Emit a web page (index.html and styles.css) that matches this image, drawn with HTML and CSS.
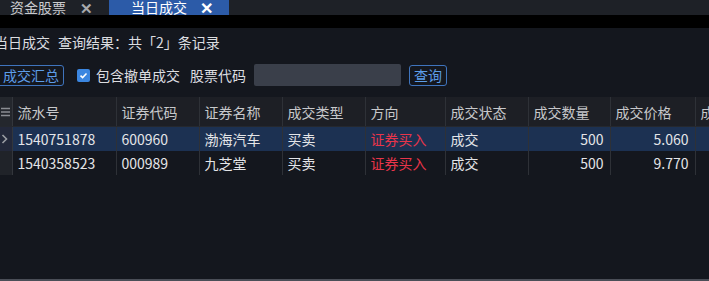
FILE: index.html
```html
<!DOCTYPE html>
<html lang="zh-CN">
<head>
    <meta charset="UTF-8">
    <title>当日成交</title>
    <link rel="stylesheet" href="styles.css">
</head>
<body>
    <div class="tabs">
        <div class="tab">资金股票<span class="close">✕</span></div>
        <div class="tab active">当日成交<span class="close">✕</span></div>
    </div>
    <div class="strip"></div>
    <div class="panel">
        <div class="title">当日成交<span class="result">查询结果：共「2」条记录</span></div>
        <div class="toolbar">
            <button class="btn">成交汇总</button>
            <label class="check"><span class="box">
                <svg width="9" height="9" viewBox="0 0 9 9"><path d="M1.5 4.6 L3.6 6.6 L7.5 2.4" fill="none" stroke="#fff" stroke-width="1.5"/></svg>
            </span>包含撤单成交</label>
            <span class="label">股票代码</span>
            <input class="code" type="text">
            <button class="btn small">查询</button>
        </div>
        <div class="grid-wrap">
            <table class="grid">
                <colgroup>
                    <col style="width:12px"><col style="width:104px"><col style="width:83px"><col style="width:83px"><col style="width:83px"><col style="width:80px"><col style="width:83px"><col style="width:82px"><col style="width:85px"><col style="width:90px">
                </colgroup>
                <tr>
                    <th class="rh">
                        <svg width="9" height="10" viewBox="0 0 9 10"><path d="M0 1.5H9M0 5H9M0 8.5H9" stroke="#8a8d93" stroke-width="1.6"/></svg>
                    </th>
                    <th>流水号</th><th>证券代码</th><th>证券名称</th><th>成交类型</th><th>方向</th><th>成交状态</th><th>成交数量</th><th>成交价格</th><th>成交金额</th>
                </tr>
                <tr class="sel">
                    <td class="rh">
                        <svg width="7" height="10" viewBox="0 0 7 10"><path d="M1.5 1 L5.5 5 L1.5 9" fill="none" stroke="#9a9da3" stroke-width="1.6"/></svg>
                    </td>
                    <td>1540751878</td><td>600960</td><td>渤海汽车</td><td>买卖</td><td class="buy">证券买入</td><td>成交</td><td class="num">500</td><td class="num">5.060</td><td class="num">2530.00</td>
                </tr>
                <tr>
                    <td class="rh"></td>
                    <td>1540358523</td><td>000989</td><td>九芝堂</td><td>买卖</td><td class="buy">证券买入</td><td>成交</td><td class="num">500</td><td class="num">9.770</td><td class="num">4885.00</td>
                </tr>
            </table>
        </div>
    </div>
    <div class="bottom"></div>
</body>
</html>
```

FILE: styles.css
```css
body { margin: 0; background: #14171e; font-family: "Noto Sans CJK SC", "Noto Sans", sans-serif; font-size: 14px; color: #dcdde0; overflow: hidden; height: 281px; display: flex; flex-direction: column; }
.tabs { height: 15px; overflow: hidden; display: flex; background: #1e2127; }
.tab { display: flex; align-items: center; height: 15px; line-height: 11px; padding: 0 0 0 10px; box-sizing: border-box; width: 109px; color: #c9cacd; }
.tab .close { margin-left: auto; margin-right: 16px; font-size: 15px; font-weight: bold; color: #a9aaad; }
.tab.active { background: #2c5ba8; color: #fff; width: 120px; padding-left: 22px; }
.tab.active .close { color: #fff; margin-right: 16px; font-size: 16px; }
.strip { height: 13px; background: #000; }
.panel { flex: 1; margin-left: -6px; }
.title { height: 28px; line-height: 28px; color: #dcdde0; }
.title .result { margin-left: 8px; }
.toolbar { display: flex; align-items: center; height: 22px; margin-top: 8px; }
.btn { font-family: inherit; font-size: 14px; background: transparent; color: #5d9de8; border: 1px solid #3f74bd; border-radius: 3px; height: 21px; line-height: 17px; padding: 0 4px 0 8px; }
.btn.small { padding: 0 4px; height: 21px; margin-left: 8px; }
.check { display: flex; align-items: center; margin-left: 13px; }
.box { width: 13px; height: 13px; background: #3b86e0; border-radius: 2px; margin-right: 6px; display: flex; align-items: center; justify-content: center; }
.label { margin-left: 10px; }
.code { width: 147px; height: 22px; box-sizing: border-box; margin-left: 8px; border: none; border-radius: 2px; background: #3a3f4a; }
.grid-wrap { margin-top: 11px; margin-left: 6px; overflow: hidden; }
.grid { table-layout: fixed; width: 775px; border-collapse: collapse; }
.grid th, .grid td { border-right: 1px solid #2e3137; padding: 0 6px 0 5px; white-space: nowrap; overflow: hidden; text-align: left; font-weight: normal; }
.grid th { height: 29px; background: #1d1f25; color: #c7c8cb; border-bottom: 1px solid #25282e; }
.grid td { height: 24px; color: #e4e5e8; }
.grid .rh { padding: 0; background: #202329; border-right: 1px solid #33363c; text-align: left; }
.grid th.rh { background: #24272d; }
.grid .rh svg { display: block; margin-left: 1px; }
.grid tr.sel td { background: #1c3152; }
.grid tr.sel td.rh { background: #23283a; }
.grid td.num { text-align: right; }
.grid td.buy { color: #e8354a; }
.bottom { height: 2px; background: #4a4e57; }
```
